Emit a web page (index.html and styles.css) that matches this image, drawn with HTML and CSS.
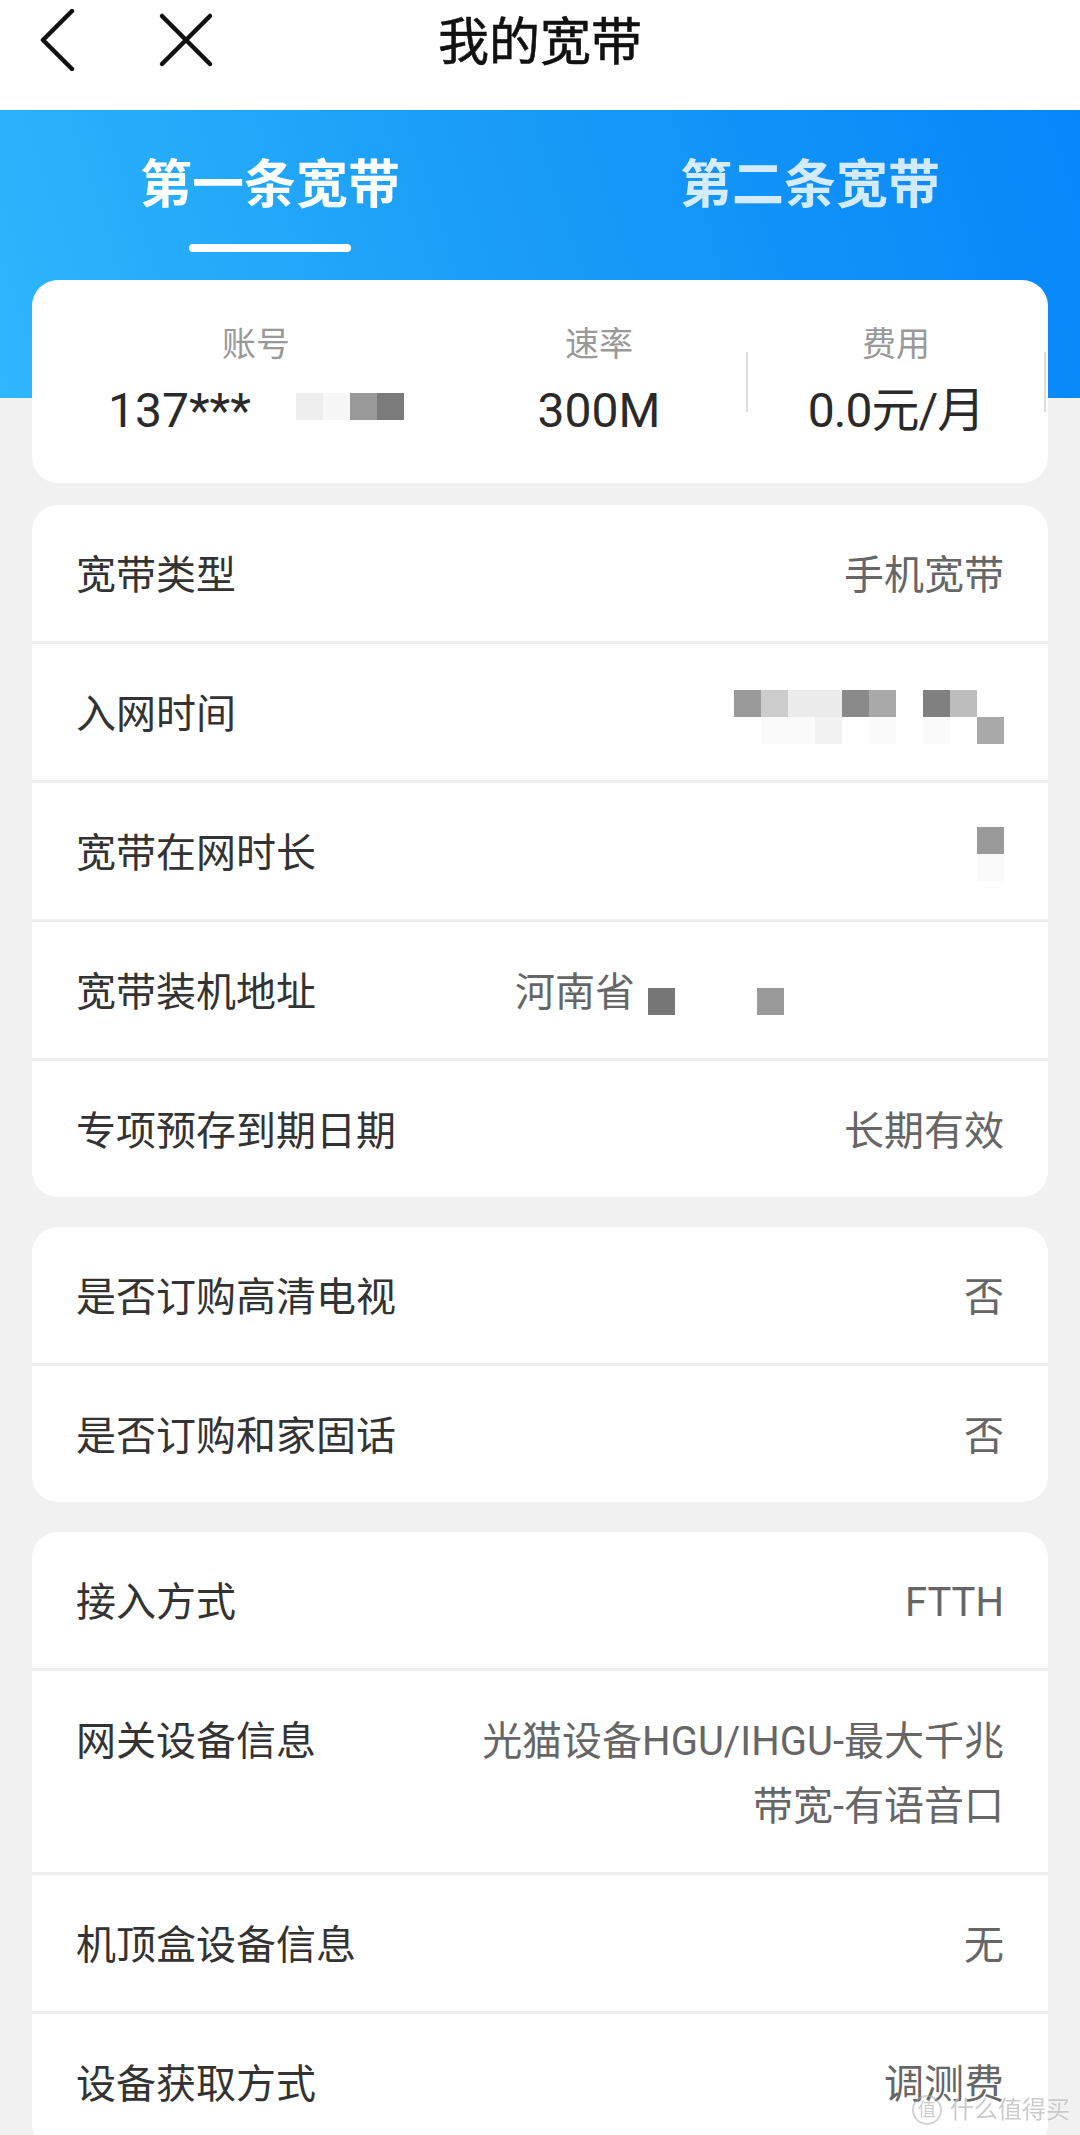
FILE: index.html
```html
<!DOCTYPE html>
<html lang="zh-CN">
<head>
<meta charset="utf-8">
<title>我的宽带</title>
<link rel="stylesheet" href="styles.css">
</head>
<body>
<div class="page">
  <header class="topbar">
    <div class="nav-left">
      <svg class="icon-back" width="36" height="62" viewBox="0 0 36 62" aria-hidden="true">
        <path d="M32 2 L3 31 L32 60" fill="none" stroke="#111" stroke-width="4.5" stroke-linecap="round" stroke-linejoin="round"/>
      </svg>
      <svg class="icon-close" width="56" height="56" viewBox="0 0 56 56" aria-hidden="true">
        <path d="M4 4 L52 52 M52 4 L4 52" fill="none" stroke="#111" stroke-width="4.5" stroke-linecap="round"/>
      </svg>
    </div>
    <h1 class="title">我的宽带</h1>
    <div class="nav-right"></div>
  </header>

  <section class="hero">
    <div class="tabs">
      <div class="tab active">
        <span class="tab-label">第一条宽带</span>
        <span class="tab-bar"></span>
      </div>
      <div class="tab">
        <span class="tab-label">第二条宽带</span>
      </div>
    </div>

    <div class="card summary">
      <div class="stat stat-account">
        <div class="stat-label">账号</div>
        <div class="stat-value">137***<span class="mosaic-inline"><i class="px m-f0"></i><i class="px m-f8"></i><i class="px m-99"></i><i class="px m-7a"></i></span></div>
      </div>
      <div class="stat stat-speed">
        <div class="stat-label">速率</div>
        <div class="stat-value">300M</div>
      </div>
      <div class="stat-divider"></div>
      <div class="stat stat-fee">
        <div class="stat-label">费用</div>
        <div class="stat-value">0.0元/月</div>
      </div>
      <div class="stat-divider"></div>
    </div>
  </section>

  <section class="card list">
    <div class="row">
      <span class="row-label">宽带类型</span>
      <span class="row-value">手机宽带</span>
    </div>
    <div class="row">
      <span class="row-label">入网时间</span>
      <span class="mosaic mosaic-date">
        <i class="px m-99"></i><i class="px m-cc"></i><i class="px m-ee"></i><i class="px m-ee"></i><i class="px m-8a"></i><i class="px m-aa"></i><i class="px m-ff"></i><i class="px m-80"></i><i class="px m-bb"></i><i class="px m-ff"></i>
        <i class="px m-ff"></i><i class="px m-fa"></i><i class="px m-fa"></i><i class="px m-f2"></i><i class="px m-ff"></i><i class="px m-fa"></i><i class="px m-ff"></i><i class="px m-fa"></i><i class="px m-ff"></i><i class="px m-aa"></i>
      </span>
    </div>
    <div class="row">
      <span class="row-label">宽带在网时长</span>
      <span class="mosaic mosaic-single">
        <i class="px m-99"></i>
        <i class="px m-fa"></i>
      </span>
    </div>
    <div class="row">
      <span class="row-label">宽带装机地址</span>
      <span class="row-value value-address">河南省<i class="px px-inline m-77 gap-a"></i><i class="px px-inline m-99 gap-b"></i></span>
    </div>
    <div class="row">
      <span class="row-label">专项预存到期日期</span>
      <span class="row-value">长期有效</span>
    </div>
  </section>

  <section class="card list">
    <div class="row">
      <span class="row-label">是否订购高清电视</span>
      <span class="row-value">否</span>
    </div>
    <div class="row">
      <span class="row-label">是否订购和家固话</span>
      <span class="row-value">否</span>
    </div>
  </section>

  <section class="card list">
    <div class="row">
      <span class="row-label">接入方式</span>
      <span class="row-value">FTTH</span>
    </div>
    <div class="row">
      <span class="row-label">网关设备信息</span>
      <span class="row-value">光猫设备HGU/IHGU-最大千兆带宽-有语音口</span>
    </div>
    <div class="row">
      <span class="row-label">机顶盒设备信息</span>
      <span class="row-value">无</span>
    </div>
    <div class="row">
      <span class="row-label">设备获取方式</span>
      <span class="row-value">调测费</span>
    </div>
  </section>

  <div class="watermark">
    <span class="wm-logo">值</span>
    <span class="wm-text">什么值得买</span>
  </div>
</div>
</body>
</html>
```

FILE: styles.css
```css
* {
  box-sizing: border-box;
}

html, body {
  margin: 0;
  padding: 0;
}

body {
  background: #f1f1f1;
  font-family: Roboto, "Noto Sans CJK SC", sans-serif;
  color: #333;
}

.page {
  width: 1080px;
  padding-bottom: 40px;
}

/* ---------- top bar ---------- */
.topbar {
  height: 110px;
  background: #fff;
  display: grid;
  grid-template-columns: 1fr auto 1fr;
  align-items: start;
}

.nav-left {
  height: 80px;
  display: flex;
  align-items: center;
  padding-left: 40px;
}

.icon-close {
  margin-left: 82px;
}

.title {
  margin: 0;
  padding-top: 3px;
  height: 83px;
  line-height: 80px;
  font-size: 51px;
  font-weight: 400;
  color: #111;
  letter-spacing: 0;
  -webkit-text-stroke: 0.6px #111;
}

/* ---------- hero ---------- */
.hero {
  background-image: linear-gradient(72deg, #2db7fc 0%, #1a9cf7 48%, #0686f9 100%);
  background-size: 100% 288px;
  background-repeat: no-repeat;
  background-color: #f1f1f1;
  padding-top: 46px;
}

.tabs {
  display: flex;
  align-items: flex-start;
}

.tab {
  flex: 1;
  display: flex;
  flex-direction: column;
  align-items: center;
}

.tab-label {
  font-size: 52px;
  line-height: 60px;
  font-weight: 700;
  color: rgba(255, 255, 255, 0.82);
}

.tab.active .tab-label {
  color: #fff;
}

.tab-bar {
  width: 162px;
  height: 8px;
  margin-top: 28px;
  border-radius: 4px;
  background: #fff;
}

.card {
  background: #fff;
  border-radius: 26px;
  margin: 0 32px;
}

.summary {
  margin-top: 28px;
  padding: 44px 0;
  display: flex;
  align-items: center;
}

.stat {
  display: flex;
  flex-direction: column;
  align-items: center;
}

.stat-account {
  width: 420px;
  padding-left: 28px;
}

.stat-speed {
  width: 294px;
}

.stat-fee {
  width: 296px;
}

.stat-label {
  font-size: 34px;
  line-height: 40px;
  color: #999;
}

.stat-value {
  margin-top: 19px;
  font-size: 48px;
  line-height: 56px;
  color: #2a2a2a;
  white-space: nowrap;
}

.stat-fee .stat-value {
  letter-spacing: -1px;
}

.stat-divider {
  width: 2px;
  height: 60px;
  background: #dcdcdc;
}

.mosaic-inline {
  display: inline-flex;
  margin-left: 45px;
  vertical-align: 7px;
}

/* ---------- mosaic pixels ---------- */
.px {
  display: block;
  width: 27px;
  height: 27px;
}

.px-inline {
  display: inline-block;
  vertical-align: -9px;
}

.m-ff { background: #ffffff; }
.m-fa { background: #fafafa; }
.m-f8 { background: #f7f7f7; }
.m-f2 { background: #f2f2f2; }
.m-f0 { background: #eeeeee; }
.m-ee { background: #ececec; }
.m-cc { background: #cccccc; }
.m-bb { background: #bdbdbd; }
.m-aa { background: #a9a9a9; }
.m-99 { background: #9a9a9a; }
.m-8a { background: #8a8a8a; }
.m-80 { background: #808080; }
.m-7a { background: #7a7a7a; }
.m-77 { background: #777777; }

.mosaic {
  display: grid;
  grid-auto-rows: 27px;
  align-self: center;
}

.mosaic-date {
  grid-template-columns: repeat(10, 27px);
  margin-top: 5px;
}

.mosaic-single {
  grid-template-columns: 27px;
}

/* ---------- list cards ---------- */
.list {
  margin-top: 30px;
}

.hero + .list {
  margin-top: 22px;
}

.row {
  display: flex;
  justify-content: space-between;
  align-items: flex-start;
  padding: 38px 44px 33px;
  font-size: 40px;
  line-height: 65px;
}

.row + .row {
  border-top: 3px solid #efefef;
}

.row-label {
  color: #333;
  white-space: nowrap;
}

.row-value {
  color: #666;
  text-align: right;
  max-width: 540px;
}

.value-address {
  width: 489px;
  text-align: left;
  white-space: nowrap;
}

.gap-a {
  margin-left: 13px;
}

.gap-b {
  margin-left: 82px;
}

/* ---------- watermark overlay ---------- */
.watermark {
  position: fixed;
  right: 10px;
  bottom: 10px;
  display: flex;
  align-items: center;
  gap: 8px;
  color: rgba(160, 160, 160, 0.55);
  text-shadow: 0 0 2px rgba(255, 255, 255, 0.9);
}

.wm-logo {
  width: 30px;
  height: 30px;
  border: 2px solid rgba(170, 170, 170, 0.5);
  border-radius: 50%;
  font-size: 18px;
  line-height: 26px;
  text-align: center;
}

.wm-text {
  font-size: 24px;
  line-height: 30px;
}
```
